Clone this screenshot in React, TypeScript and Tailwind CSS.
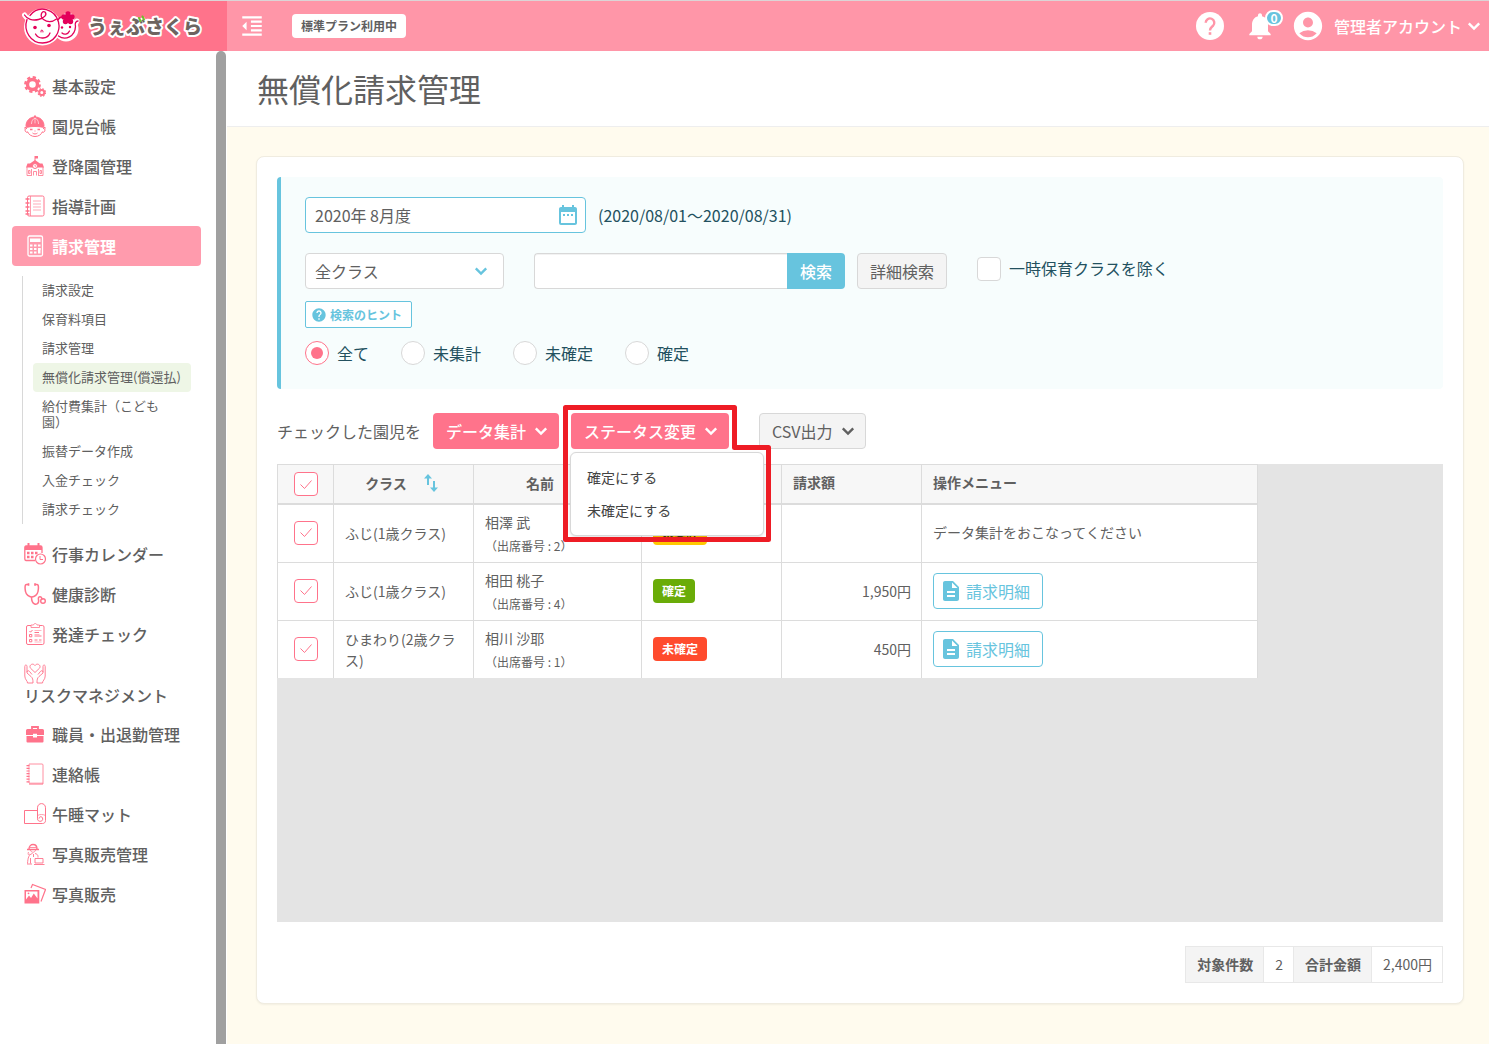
import { useState } from 'react'
import type { ReactNode } from 'react'
import {
  MdAccountCircle,
  MdDateRange,
  MdDescription,
  MdFormatIndentDecrease,
  MdHelp,
  MdNotifications,
} from 'react-icons/md'

type NavItem = {
  label: string
  icon: ReactNode
  active?: boolean
  children?: string[]
}

type Row = {
  id: number
  className: string
  name: string
  number: number
  status: '未集計' | '確定' | '未確定'
  amount?: string
}

const icons = {
  gears: (
    <>
      <circle cx="8.5" cy="9.500" r="5" strokeWidth="3.4" />
      <circle cx="8.5" cy="9.500" r="7.200" strokeWidth="2.4" strokeDasharray="3.2 2.455" />
      <circle cx="17.8" cy="17.500" r="2.5" strokeWidth="2" />
      <circle cx="17.8" cy="17.500" r="3.7" strokeWidth="1.3" strokeDasharray="1.6 1.306" />
    </>
  ),
  child: (
    <>
      <path d="M2 11C2 5.500 6 2 11 2s9 3.500 9 9c-5-2-13-2-18 0z" fill="currentColor" />
      <path d="M11 .5v2" strokeWidth="2" />
      <path d="M7.500 9C7.500 5.500 9 4 11 3c2 1 3.500 2.500 3.500 6M11 3v5.500" stroke="#fff" strokeWidth=".6" />
      <path d="M.5 13c5-5 16-5 21 0-5-2-16-2-21 0z" fill="currentColor" />
      <path d="M3 13.500c-3-.5-2.500 4 .5 4M19 13.500c3-.5 2.500 4-.5 4M3.500 16.500c1 3 4 5 7.500 5s6.500-2 7.500-5" />
      <path d="M6 14.500h2.500M13.500 14.500H16" strokeWidth="1.400" />
      <path d="M8.500 18c1.500 1.300 3.500 1.300 5 0M10.500 16h1" />
    </>
  ),
  school: (
    <>
      <path d="M11 6V1" />
      <path d="M11 1h3v2.500h-3z" fill="currentColor" stroke="none" />
      <path d="M11 5l5 3.500h2.500l1.500 4H2l1.500-4H6z" fill="currentColor" stroke="none" />
      <circle cx="11" cy="11" r="2.500" fill="#fff" />
      <path d="M11 9.800v1.400h1M3 12v8.500h5M14 20.500h5V12M7.500 14v6M14.500 14v6M9.500 20.500V16.500h3v4M4.500 15.500h1.500v3H4.500zM16 15.500h1.500v3H16z" strokeWidth=".8" />
    </>
  ),
  notebook: (
    <>
      <rect x="3.500" y="1" width="16.500" height="20" rx="1.500" />
      <path d="M6.500 1v20" strokeWidth=".7" />
      <path d="M1.500 4h4M1.500 8h4M1.500 12h4M1.500 16h4M1.500 19h4" strokeWidth="1.400" />
      <path d="M9 6h8M9 9h8M9 12h8M9 15h8" strokeWidth=".6" />
    </>
  ),
  calculator: (
    <>
      <rect x="4" y="1" width="14.500" height="20" rx="1.500" strokeWidth="1.300" />
      <path d="M6 3.500h10.500v3.500H6z" fill="currentColor" stroke="none" />
      <path d="M6 10.500h2.500M10 10.500h2.500M14 10.500h2.500M6 14h2.500M10 14h2.500M14 14h2.500M6 17.500h2.500M10 17.500h2.500" strokeWidth="2" />
      <path d="M15.250 13v5.500" strokeWidth="2.500" />
    </>
  ),
  calendar: (
    <>
      <path d="M11 17.500H2A1.500 1.500 0 0 1 .8 16V4.500A1.500 1.500 0 0 1 2 3h14.500A1.500 1.500 0 0 1 18 4.500V10" strokeWidth="1.300" />
      <path d="M1 3h17v4H1z" fill="currentColor" stroke="none" />
      <path d="M4.500 0v4M14.500 0v4" strokeWidth="2" />
      <path d="M3 10h2.500M7 10h2.500M11 10h2.500M3 14h2.500M7 14h2.500" strokeWidth="2.400" />
      <circle cx="16.500" cy="16" r="5" strokeWidth="1.200" />
      <path d="M16 13v3.500h3" />
    </>
  ),
  stethoscope: (
    <>
      <path d="M4.500 1.500H2.500C.5 1.500 1 6 1.500 8.500 2 11.500 5 14 7.800 14s5.700-2.500 6.200-5.500c.5-2.500 1-7-1-7h-2" strokeWidth="1.500" />
      <path d="M4.500.3v2.500M11 .3v2.500" strokeWidth="1.700" />
      <path d="M7.500 14c0 8.500 6 8.500 7 5 .6-2-1-4 .5-5 2-1 3 1 3 2.500" strokeWidth="1.500" />
      <circle cx="19" cy="18" r="2.300" strokeWidth="1.400" />
    </>
  ),
  clipboard: (
    <>
      <rect x="2.500" y="2.500" width="17.500" height="19" rx="1.500" />
      <path d="M7 4.500V2h2.500c.5-2 3-2 3.500 0h2.500v2.500z" fill="#fff" strokeWidth=".8" />
      <path d="M5.500 8l1 1.200L8.500 7M5.500 11.500h2.300v2.300H5.500zM5.500 16.500h2.300v2.300H5.500zM10.500 13h7M10.500 17h3M15 17h2.500M10.500 9.500H15" />
      <path d="M10.500 7.500h7M10.500 11.500h5M10.500 19h7" strokeWidth=".5" />
    </>
  ),
  hands: (
    <>
      <path d="M11 10.500L6.500 6.200C4.500 3.500 8.500.3 11 3.500c2.500-3.200 6.500 0 4.500 2.700z" strokeWidth=".9" />
      <path d="M.8 4.500c0-2 2.200-2 2.200 0V11l4 3.500c1.700 1.500 2 3 2 6.500M3.500 21c.2-2-2.700-3.500-2.700-7V4.500M3 10c0-1.500 1.800-1.700 2.600-.5l2.400 3M3.500 21H9" strokeWidth=".9" />
      <path d="M21.200 4.500c0-2-2.200-2-2.200 0V11l-4 3.500c-1.700 1.500-2 3-2 6.500M18.500 21c-.2-2 2.700-3.500 2.700-7V4.500M19 10c0-1.500-1.800-1.700-2.600-.5L14 12.500M18.500 21H13" strokeWidth=".9" />
    </>
  ),
  briefcase: (
    <>
      <path d="M8 6.500V4h6v2.500" strokeWidth="1.800" />
      <path d="M3.500 6h15A1.500 1.500 0 0 1 20 7.500V12h-7v-1.300H9V12H2V7.500A1.500 1.500 0 0 1 3.500 6zM2.500 13H9v1.500h4V13h6.500v5.500a1 1 0 0 1-1 1h-15a1 1 0 0 1-1-1z" fill="currentColor" stroke="none" />
    </>
  ),
  contactBook: (
    <>
      <path d="M5 1h13a1 1 0 0 1 1 1v19H5" strokeWidth=".8" />
      <path d="M5 20.500h14" strokeWidth="2" opacity=".5" />
      <path d="M5 1v19" strokeWidth=".6" />
      <path d="M4 2v18" strokeWidth="3" strokeDasharray="1.200 1.500" />
    </>
  ),
  mat: (
    <>
      <path d="M13.500 7.500H.5v13h18c1.700 0 3-1 3-3V4.800C21.500-.8 13.500-.8 13.500 4.800v11c0 3.200 5 3.400 5.200.4.200-3.200-3.700-3.200-3.700-.6" />
      <path d="M13.500 12.500c2-1.300 6-1.300 8 0" strokeWidth=".7" />
    </>
  ),
  photographer: (
    <>
      <path d="M5 6c0-6 8-6 8 0M3 6.500h12" strokeWidth="1.400" />
      <path d="M6 4.500h6M6.500 7c.5 3 4.500 3 5 0M4.500 9c-1 3 0 3 1.500 2" strokeWidth=".8" />
      <path d="M8.500 10.500C4.500 11.500 4 15 3.500 20.500M6.500 15v5.500M11 10.500c3 .8 3 2 3 4M3 21h5M9.500 11v3" strokeWidth=".9" />
      <path d="M11 15.500h8v4.500h-8zM10 21.500h10.500" strokeWidth=".9" />
    </>
  ),
  photos: (
    <>
      <path d="M7 5l1.500-3.500 13 5-4.500 12" strokeWidth="1.200" />
      <path d="M.5 7H15.300V20.500H.5zM2 8.500v8l3-4 2 2.500 2.800-4.500 3.700 5v-7z" fill="currentColor" fillRule="evenodd" stroke="none" />
      <circle cx="4.500" cy="10.300" r=".9" fill="currentColor" stroke="none" />
    </>
  ),
}

const navItems: NavItem[] = [
  { label: '基本設定', icon: icons.gears },
  { label: '園児台帳', icon: icons.child },
  { label: '登降園管理', icon: icons.school },
  { label: '指導計画', icon: icons.notebook },
  {
    label: '請求管理',
    icon: icons.calculator,
    active: true,
    children: [
      '請求設定',
      '保育料項目',
      '請求管理',
      '無償化請求管理(償還払)',
      '給付費集計（こども園）',
      '振替データ作成',
      '入金チェック',
      '請求チェック',
    ],
  },
  { label: '行事カレンダー', icon: icons.calendar },
  { label: '健康診断', icon: icons.stethoscope },
  { label: '発達チェック', icon: icons.clipboard },
  { label: 'リスクマネジメント', icon: icons.hands },
  { label: '職員・出退勤管理', icon: icons.briefcase },
  { label: '連絡帳', icon: icons.contactBook },
  { label: '午睡マット', icon: icons.mat },
  { label: '写真販売管理', icon: icons.photographer },
  { label: '写真販売', icon: icons.photos },
]

const rows: Row[] = [
  { id: 1, className: 'ふじ(1歳クラス)', name: '相澤 武', number: 2, status: '未集計' },
  { id: 2, className: 'ふじ(1歳クラス)', name: '相田 桃子', number: 4, status: '確定', amount: '1,950円' },
  { id: 3, className: 'ひまわり(2歳クラス)', name: '相川 沙耶', number: 1, status: '未確定', amount: '450円' },
]

const statusClasses = {
  未集計: 'bg-[#ffc800] text-[#4a3c00]',
  確定: 'bg-[#6aac08] text-white',
  未確定: 'bg-[#ff4b2d] text-white',
}

const filters = ['全て', '未集計', '未確定', '確定']

function Logo() {
  return (
    <svg width="190" height="42" viewBox="0 0 190 42" role="img" aria-label="うぇぶさくら">
      <g fill="#fff" stroke="#fff" strokeWidth="5" strokeLinejoin="round" strokeLinecap="round">
        <circle cx="20.500" cy="22" r="16" />
        <circle cx="44" cy="24" r="10" />
        <circle cx="46" cy="14" r="4" />
        <path d="M2.500 10c2 3 5 5 7 5M53 20l2-4" fill="none" />
      </g>
      <g fill="none" stroke="#e4005a" strokeWidth="1.300" strokeLinecap="round" strokeLinejoin="round">
        <path d="M2.500 10c2.500 4 8 6 14 4.500 6-1.500 9-5 6.500-7.500-3-2-6 4-1.500 7.500 4 3 9 2.500 13-.5" />
        <path d="M5 14.500C1 26 9 38 20.500 38S39 27 36.500 17C33 4 17-1 8 10.500" />
        <path d="M36.500 31c7 5 16.500 .5 17-9.500M53.500 21.500c-1-3 .5-5.500 2.500-5.500M36 15c1-2 2-3 4-3" />
        <path d="M13.500 29c3 5.500 12 5.500 14.500-1" />
        <path d="M40 28c2 2 6 1.500 7.500-2" />
        <path d="M19 27v-1.500c1.200-1 2.200 0 2 1.500" strokeWidth="1" />
      </g>
      <g fill="#e4005a">
        <circle cx="13" cy="22.500" r="1.800" />
        <circle cx="27" cy="20.500" r="1.800" />
        <circle cx="40" cy="22.500" r="1.200" />
        <circle cx="48" cy="22" r="1.200" />
        <circle cx="46" cy="9" r="2.700" />
        <circle cx="50" cy="12" r="2.700" />
        <circle cx="48.500" cy="16.500" r="2.700" />
        <circle cx="43.500" cy="16.500" r="2.700" />
        <circle cx="42" cy="12" r="2.700" />
        <circle cx="46" cy="13" r="3" />
      </g>
      <text
        x="66"
        y="29"
        className="text-[19px] font-black"
        fill="#6d6460"
        stroke="#fff"
        strokeWidth="4"
        strokeLinejoin="round"
        paintOrder="stroke"
      >
        うぇぶさくら
      </text>
      <path d="M117 13l1.500 3M120.500 11.500l1.500 3" stroke="#6fbe2c" strokeWidth="2" strokeLinecap="round" />
    </svg>
  )
}

function Chevron() {
  return (
    <svg width="24" height="24" viewBox="0 0 24 24" fill="none" stroke="currentColor">
      <path d="M6.800 9.300l5.200 5.200 5.200-5.200" strokeWidth="2.400" />
    </svg>
  )
}

function Header() {
  return (
    <header className="flex h-[51px] border-t border-[#dcd4d6] bg-[#ff96a8] text-white">
      <a href="#" className="flex w-[227px] shrink-0 items-center bg-[#ff738b] pl-[22px]">
        <Logo />
      </a>
      <div className="flex flex-1 items-center justify-between pl-3">
        <div className="flex items-center gap-[27px]">
          <button type="button" aria-label="メニューを閉じる">
            <MdFormatIndentDecrease size={26} />
          </button>
          <span className="rounded bg-white px-[9px] text-xs leading-6 font-bold text-[#606060]">
            標準プラン利用中
          </span>
        </div>
        <div className="flex items-center pr-[3px]">
          <button type="button" aria-label="ヘルプ">
            <svg width="34" height="34" viewBox="0 0 34 34" fill="none">
              <circle cx="17" cy="17" r="14" fill="currentColor" />
              <path
                d="M12.700 13.800a4.300 4.300 0 1 1 7.300 3c-1.600 1.500-3 2.200-3 4.700"
                stroke="#ff96a8"
                strokeWidth="2.400"
              />
              <path d="M15.700 23.200h2.600v2.600h-2.600z" fill="#ff96a8" />
            </svg>
          </button>
          <button type="button" aria-label="お知らせ" className="relative ml-[17px]">
            <MdNotifications size={32} />
            <span className="absolute top-0 left-[21px] h-4 w-[18px] rounded-full border-2 border-white bg-[#67c4de] text-center text-xs leading-3 font-bold">
              0
            </span>
          </button>
          <button type="button" className="ml-[15px] flex items-center">
            <MdAccountCircle size={34} />
            <span className="ml-[9px] text-base font-medium">管理者アカウント</span>
            <Chevron />
          </button>
        </div>
      </div>
    </header>
  )
}

function Sidebar() {
  return (
    <aside className="flex w-[227px] shrink-0 bg-white">
      <nav className="w-[216px] pt-[15px] pr-[15px] pl-3">
        <ul>
          {navItems.map((item) => (
            <li key={item.label}>
              <a
                href="#"
                className={`flex min-h-10 flex-wrap content-center items-center gap-x-1.5 rounded-sm px-3 py-2 text-base leading-[22px] ${
                  item.active ? 'bg-[#ff9bad] font-bold text-white' : 'font-medium text-[#606060]'
                }`}
              >
                <svg
                  width="22"
                  height="22"
                  viewBox="0 0 22 22"
                  fill="none"
                  stroke="currentColor"
                  className={item.active ? 'text-white' : 'text-[#ff738b]'}
                >
                  {item.icon}
                </svg>
                <span>{item.label}</span>
              </a>
              {item.children && (
                <ul className="my-2.5 mr-2.5 ml-2.5 border-l border-[#d8d8d8] pl-2.5">
                  {item.children.map((child) => (
                    <li key={child}>
                      <a
                        href="#"
                        className={`block rounded-sm pt-1.5 pr-2 pb-[7px] pl-[9px] text-[13px] leading-4 text-[#606060] [text-spacing-trim:space-all] ${
                          child.includes('償還払') ? 'bg-[#eef6e6]' : ''
                        }`}
                      >
                        {child}
                      </a>
                    </li>
                  ))}
                </ul>
              )}
            </li>
          ))}
        </ul>
      </nav>
      <div className="w-2.5 rounded-t-full bg-[#a0a0a0]" />
    </aside>
  )
}

function SearchPanel() {
  const [filter, setFilter] = useState('全て')

  return (
    <form
      onSubmit={(e) => e.preventDefault()}
      className="rounded border-l-4 border-[#67c4de] bg-[#f7fdfd] px-6 pt-5 pb-6 text-[#23515f]"
    >
      <div className="flex items-center gap-3">
        <label className="grid w-[281px] items-center">
          <input
            type="text"
            aria-label="対象月"
            defaultValue="2020年 8月度"
            className="col-start-1 row-start-1 h-9 w-full rounded border border-[#67c4de] bg-white px-[9px] text-base text-[#606060] outline-none"
          />
          <span className="col-start-1 row-start-1 mr-1.5 justify-self-end text-[#67c4de]">
            <MdDateRange size={24} />
          </span>
        </label>
        <span>(2020/08/01～2020/08/31)</span>
      </div>

      <div className="mt-5 flex items-start">
        <div className="grid w-[199px] items-center">
          <select
            aria-label="クラス"
            className="col-start-1 row-start-1 h-9 w-full appearance-none rounded border border-[#d8d8d8] bg-white px-[9px] text-base text-[#606060]"
          >
            <option>全クラス</option>
          </select>
          <span className="pointer-events-none col-start-1 row-start-1 mr-[11px] justify-self-end text-[#67c4de]">
            <Chevron />
          </span>
        </div>
        <div className="ml-[30px] flex">
          <input
            type="text"
            aria-label="検索キーワード"
            className="h-9 w-[253px] rounded-l border border-r-0 border-[#d8d8d8] bg-white px-2 inset-shadow-2xs outline-none"
          />
          <button type="submit" className="h-9 rounded-r bg-[#67c4de] px-[13px] font-medium text-white">
            検索
          </button>
        </div>
        <button
          type="button"
          className="ml-3 h-9 rounded border border-[#d8d8d8] bg-[#f4f4f4] px-3 text-[#606060]"
        >
          詳細検索
        </button>
        <label className="mt-1 ml-[30px] flex gap-2 leading-[22px]">
          <input
            type="checkbox"
            className="h-6 w-6 appearance-none rounded border border-[#d8d8d8] bg-white checked:border-[#ff738b] checked:bg-[#ff738b]"
          />
          一時保育クラスを除く
        </label>
      </div>

      <button
        type="button"
        className="mt-3 flex h-[27px] items-center gap-[3px] rounded-xs border border-[#67c4de] bg-white pr-[9px] pl-[5px] text-xs font-bold text-[#67c4de]"
      >
        <MdHelp size={16} />
        検索のヒント
      </button>

      <div className="mt-[13px] flex gap-8">
        {filters.map((name) => (
          <label key={name} className="flex items-center gap-2 leading-6">
            <span className="grid place-items-center">
              <input
                type="radio"
                name="status"
                checked={filter === name}
                onChange={() => setFilter(name)}
                className="peer col-start-1 row-start-1 h-6 w-6 appearance-none rounded-full border border-[#d8d8d8] bg-white checked:border-[#ff738b]"
              />
              <span className="pointer-events-none col-start-1 row-start-1 hidden h-3 w-3 rounded-full bg-[#ff738b] peer-checked:block" />
            </span>
            {name}
          </label>
        ))}
      </div>
    </form>
  )
}

function StatusMenu() {
  const [isOpen, setIsOpen] = useState(true)

  return (
    <div className="relative ml-3">
      <button
        type="button"
        aria-expanded={isOpen}
        onClick={() => setIsOpen(!isOpen)}
        className="flex h-9 items-center gap-[3px] rounded bg-[#ff738b] pr-1.5 pl-[13px] font-medium text-white"
      >
        ステータス変更
        <Chevron />
      </button>
      {isOpen && (
        <>
          <ul className="absolute top-[39px] -left-px z-10 w-[194px] rounded-md border border-[#d8d8d8] bg-white py-2 shadow-sm">
            {['確定にする', '未確定にする'].map((label) => (
              <li key={label}>
                <button type="button" className="block w-full px-4 text-left text-sm leading-[33px] text-[#444]">
                  {label}
                </button>
              </li>
            ))}
          </ul>
          <svg
            width="208"
            height="137"
            viewBox="0 0 208 137"
            fill="none"
            className="pointer-events-none absolute -top-2 -left-2 z-20 max-w-none"
          >
            <path d="M2.500 2.500h169v40h34v92h-203z" stroke="#ee1c25" strokeWidth="5" strokeLinejoin="round" />
          </svg>
        </>
      )}
    </div>
  )
}

function RowCheckbox({ label }: { label: string }) {
  return (
    <label className="grid place-items-center">
      <input
        type="checkbox"
        aria-label={label}
        defaultChecked
        className="peer col-start-1 row-start-1 h-6 w-6 appearance-none rounded border border-[#d8d8d8] bg-white checked:border-[#ff738b]"
      />
      <svg
        width="12"
        height="9"
        viewBox="0 0 12 9"
        fill="none"
        stroke="#ff738b"
        className="pointer-events-none invisible col-start-1 row-start-1 peer-checked:visible"
      >
        <path d="M.5 4.500l4 4 7-8" />
      </svg>
    </label>
  )
}

function SortIcon() {
  return (
    <svg width="14" height="18" viewBox="0 0 14 18" fill="#67c4de">
      <path d="M4 0l4 4.500H5V11H3V4.500H0zM10 18l-4-4.500h3V7h2v6.500h3z" />
    </svg>
  )
}

function BillingTable() {
  const th = 'h-10 border-r border-b-2 border-[#dcdcdc] px-[11px] text-left font-bold'
  const td = 'h-[58px] border-r border-b border-[#dcdcdc] group-last:h-[57px] group-last:border-b-0'

  return (
    <div className="mt-[15px] min-h-[458px] overflow-x-auto bg-[#e4e4e4]">
      <table className="w-[981px] table-fixed border-separate border-spacing-0 border-t border-l border-[#dcdcdc] text-sm leading-[21px] text-[#606060]">
        <thead className="bg-[#f7f7f7]">
          <tr>
            <th className={`${th} w-14`}>
              <RowCheckbox label="すべて選択" />
            </th>
            <th className={`${th} w-[140px] pb-0.5`}>
              <span className="flex items-center justify-center gap-[17px] pr-1">
                クラス
                <SortIcon />
              </span>
            </th>
            <th className={`${th} w-[168px] pb-0.5`}>
              <span className="flex items-center justify-center gap-[17px] pr-1">
                名前
                <SortIcon />
              </span>
            </th>
            <th className={`${th} w-[140px] pb-1`}>ステータス</th>
            <th className={`${th} w-[140px] pb-1`}>請求額</th>
            <th className={`${th} pb-1`}>操作メニュー</th>
          </tr>
        </thead>
        <tbody className="bg-white">
          {rows.map((row) => (
            <tr key={row.id} className="group">
              <td className={`${td} pb-0.5`}>
                <RowCheckbox label={`${row.name}を選択`} />
              </td>
              <td className={`${td} px-[11px]`}>{row.className}</td>
              <td className={`${td} px-[11px]`}>
                <div className="leading-6">{row.name}</div>
                <div className="text-xs leading-6">（出席番号 : {row.number}）</div>
              </td>
              <td className={`${td} px-[11px] pb-0.5`}>
                <span
                  className={`inline-block rounded px-[9px] align-middle text-xs leading-6 font-bold ${statusClasses[row.status]}`}
                >
                  {row.status}
                </span>
              </td>
              <td className={`${td} px-2.5 text-right`}>{row.amount}</td>
              <td className={`${td} px-[11px] pb-0.5`}>
                {row.amount ? (
                  <button
                    type="button"
                    className="flex h-9 items-center gap-[3px] rounded border border-[#67c4de] bg-white pr-3 pl-[5px] text-base text-[#67c4de]"
                  >
                    <MdDescription size={24} />
                    請求明細
                  </button>
                ) : (
                  'データ集計をおこなってください'
                )}
              </td>
            </tr>
          ))}
        </tbody>
      </table>
    </div>
  )
}

function Totals() {
  const cell = 'h-9 border border-[#e8e8e8] pr-2.5 pb-0.5 pl-[11px]'

  return (
    <table className="mt-6 ml-auto border-collapse text-sm text-[#606060]">
      <tbody>
        <tr>
          <th className={`${cell} bg-[#f4f4f4] font-bold`}>対象件数</th>
          <td className={cell}>2</td>
          <th className={`${cell} bg-[#f4f4f4] font-bold`}>合計金額</th>
          <td className={cell}>2,400円</td>
        </tr>
      </tbody>
    </table>
  )
}

export default function App() {
  return (
    <div className="flex min-h-screen flex-col bg-[#fffbee] font-['Noto_Sans_CJK_JP',sans-serif] text-base text-[#606060]">
      <Header />
      <div className="flex flex-1">
        <Sidebar />
        <main className="min-w-0 flex-1">
          <div className="border-b border-[#eeeeee] bg-white px-[30px]">
            <h1 className="text-[32px] leading-[75px]">無償化請求管理</h1>
          </div>
          <div className="pt-[29px] pr-[25px] pb-10 pl-[29px]">
            <section className="rounded-lg border border-[#f0ece0] bg-white p-5 shadow-xs">
              <SearchPanel />
              <div className="mt-6 flex items-center">
                <span>チェックした園児を</span>
                <button
                  type="button"
                  className="ml-3 flex h-9 items-center gap-[3px] rounded bg-[#ff738b] pr-1.5 pl-[13px] font-medium text-white"
                >
                  データ集計
                  <Chevron />
                </button>
                <StatusMenu />
                <button
                  type="button"
                  className="ml-[30px] flex h-9 items-center gap-[3px] rounded border border-[#d8d8d8] bg-[#f4f4f4] pr-[5px] pl-3"
                >
                  CSV出力
                  <Chevron />
                </button>
              </div>
              <BillingTable />
              <Totals />
            </section>
          </div>
        </main>
      </div>
    </div>
  )
}
